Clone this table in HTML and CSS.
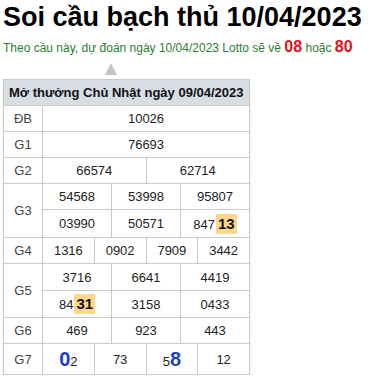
FILE: index.html
```html
<!DOCTYPE html>
<html lang="vi">
<head>
<meta charset="utf-8">
<link rel="stylesheet" href="styles.css">
</head>
<body>
<h1 class="title">Soi cầu bạch thủ 10/04/2023</h1>
<p class="pred">Theo cầu này, dự đoán ngày 10/04/2023 Lotto sẽ về <b class="red">08</b> hoặc <b class="red">80</b></p>
<div class="arrow-row"><span class="arrow"></span></div>
<table class="kq">
  <colgroup><col class="c-lb"><col span="12" class="c-n"></colgroup>
  <tr><th colspan="13" class="head">Mở thưởng Chủ Nhật ngày 09/04/2023</th></tr>
  <tr><td class="lb">ĐB</td><td colspan="12">10026</td></tr>
  <tr><td class="lb">G1</td><td colspan="12">76693</td></tr>
  <tr><td class="lb">G2</td><td colspan="6">66574</td><td colspan="6">62714</td></tr>
  <tr><td class="lb" rowspan="2">G3</td><td colspan="4">54568</td><td colspan="4">53998</td><td colspan="4">95807</td></tr>
  <tr class="tall"><td colspan="4">03990</td><td colspan="4">50571</td><td colspan="4">847<span class="hl">13</span></td></tr>
  <tr><td class="lb">G4</td><td colspan="3">1316</td><td colspan="3">0902</td><td colspan="3">7909</td><td colspan="3">3442</td></tr>
  <tr class="mid"><td class="lb" rowspan="2">G5</td><td colspan="4">3716</td><td colspan="4">6641</td><td colspan="4">4419</td></tr>
  <tr class="mid"><td colspan="4">84<span class="hl">31</span></td><td colspan="4">3158</td><td colspan="4">0433</td></tr>
  <tr><td class="lb">G6</td><td colspan="4">469</td><td colspan="4">923</td><td colspan="4">443</td></tr>
  <tr class="g7"><td class="lb">G7</td><td colspan="3"><b class="blue">0</b>2</td><td colspan="3">73</td><td colspan="3">5<b class="blue">8</b></td><td colspan="3">12</td></tr>
</table>
</body>
</html>
```
FILE: styles.css
```css
html, body { margin: 0; padding: 0; background: #fff; }
body { padding: 0 3px; font-family: "Liberation Sans", Arial, sans-serif; color: #222; }
.title { margin: 0; padding-top: 2px; font-size: 27px; line-height: 30px; font-weight: bold; color: #000; }
.pred { margin: 6px 0 0; font-size: 12px; line-height: 18px; color: #2e7d32; }
.red { color: #e0131b; font-size: 16px; }
.arrow-row { height: 22px; position: relative; }
.arrow { position: absolute; left: 102px; top: 6px; width: 0; height: 0;
  border-left: 6.5px solid transparent; border-right: 6.5px solid transparent; border-bottom: 12px solid #c4c4c4; }
.kq { border-collapse: collapse; width: 247px; table-layout: fixed; font-size: 13px; color: #222;
  box-shadow: 0 2px 1px #c8c8c8; }
.kq col.c-lb { width: 39px; }
.kq td, .kq th { border: 1px solid #c9c9c9; text-align: center; height: 25px; padding: 0; white-space: nowrap; }
.kq th.head { background: #d8dce3; text-align: left; font-weight: bold; padding-left: 5px; color: #111; }
.kq td.lb { color: #444; }
.kq tr.tall td { height: 27px; }
.kq tr.mid td { height: 26px; }
.kq tr.g7 td { height: 30px; }
.hl { display: inline-block; background: #ffd68a; font-weight: bold; font-size: 15px; padding: 1px 2px; line-height: 18px; color: #111; margin-left: 1px; }
.blue { color: #1c3fd0; font-size: 20px; }
```
